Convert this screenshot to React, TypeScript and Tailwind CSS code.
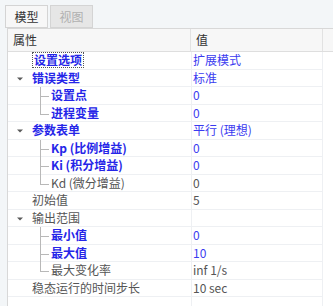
import React from "react";

type Row = {
  label: string;
  value: string;
  level: 0 | 1;
  bold?: boolean;
  blueLabel?: boolean;
  blueValue?: boolean;
  expander?: boolean;
  last?: boolean;
  focus?: boolean;
};

const rows: Row[] = [
  { label: "设置选项", value: "扩展模式", level: 0, bold: true, blueLabel: true, blueValue: true, focus: true },
  { label: "错误类型", value: "标准", level: 0, bold: true, blueLabel: true, blueValue: true, expander: true },
  { label: "设置点", value: "0", level: 1, bold: true, blueLabel: true, blueValue: true },
  { label: "进程变量", value: "0", level: 1, bold: true, blueLabel: true, blueValue: true, last: true },
  { label: "参数表单", value: "平行 (理想)", level: 0, bold: true, blueLabel: true, blueValue: true, expander: true },
  { label: "Kp (比例增益)", value: "0", level: 1, bold: true, blueLabel: true, blueValue: true },
  { label: "Ki (积分增益)", value: "0", level: 1, bold: true, blueLabel: true, blueValue: true },
  { label: "Kd (微分增益)", value: "0", level: 1, last: true },
  { label: "初始值", value: "5", level: 0 },
  { label: "输出范围", value: "", level: 0, expander: true },
  { label: "最小值", value: "0", level: 1, bold: true, blueLabel: true, blueValue: true },
  { label: "最大值", value: "10", level: 1, bold: true, blueLabel: true, blueValue: true },
  { label: "最大变化率", value: "inf 1/s", level: 1, last: true },
  { label: "稳态运行的时间步长", value: "10 sec", level: 0 },
];

function Triangle() {
  return (
    <svg width="8" height="6" viewBox="0 0 8 6" className="absolute left-[8px] top-[6px]">
      <path d="M1 1.5 L7 1.5 L4 4.5 Z" fill="#5a5a5a" />
    </svg>
  );
}

export default function App() {
  return (
    <div
      className="w-[333px] h-[306px] bg-[#f3f6f8] overflow-hidden text-[12px] leading-none"
      style={{ fontFamily: '"Noto Sans CJK SC", "Noto Sans", sans-serif' }}
    >
      {/* Tabs */}
      <div className="flex h-[28px] pt-[5px] pl-[5px] gap-[2px]">
        <div className="w-[43px] h-[23px] border border-[#d4d4d4] bg-[#f7f7f7] flex items-center justify-center text-[#333]">
          模型
        </div>
        <div className="w-[43px] h-[23px] border border-[#d4d4d4] bg-[#e6e6e6] flex items-center justify-center text-[#b0b0b0]">
          视图
        </div>
      </div>
      {/* Panel */}
      <div className="ml-[7px] border-l border-t border-[#d8d8d8] bg-white h-[278px]">
        {/* Header */}
        <div className="flex h-[23px] bg-[#f7f7f7] border-b border-[#dedede]">
          <div className="w-[183px] border-r border-[#e2e2e2] pl-[5px] flex items-center text-[#333]">属性</div>
          <div className="w-[132px] border-r border-[#e2e2e2] pl-[5px] flex items-center text-[#333]">值</div>
          <div className="flex-1" />
        </div>
        {rows.map((r, i) => {
          const blue = "text-[#2525e8]";
          const gray = "text-[#555]";
          return (
            <div key={i} className="flex h-[17.5px]">
              <div className="relative w-[183px] border-b border-[#eef0f3] flex items-center">
                {r.expander && <Triangle />}
                {r.level === 1 && (
                  <>
                    <div
                      className={
                        "absolute left-[32px] w-px bg-[#b8b8b8] top-0 " +
                        (r.last ? "h-[9px]" : "h-[18px]")
                      }
                    />
                    <div className="absolute left-[32px] top-[9px] w-[9px] h-px bg-[#b8b8b8]" />
                  </>
                )}
                <span
                  className={
                    (r.level === 1 ? "ml-[43px] " : "ml-[24px] ") +
                    (r.blueLabel ? blue : gray) +
                    (r.bold ? " font-bold" : "") +
                    (r.focus ? " border border-dotted border-[#555] px-px py-[1px]" : "")
                  }
                >
                  {r.label}
                </span>
              </div>
              <div className="w-[132px] border-l border-r border-b border-[#eef0f3] pl-[1px] flex items-center">
                <span className={r.blueValue ? "text-[#3b3bf0]" : gray}>{r.value}</span>
              </div>
              <div className="flex-1" />
            </div>
          );
        })}
        <div className="flex h-[10px]">
          <div className="w-[183px]" />
          <div className="w-[132px] border-l border-r border-[#eef0f3]" />
        </div>
      </div>
    </div>
  );
}
